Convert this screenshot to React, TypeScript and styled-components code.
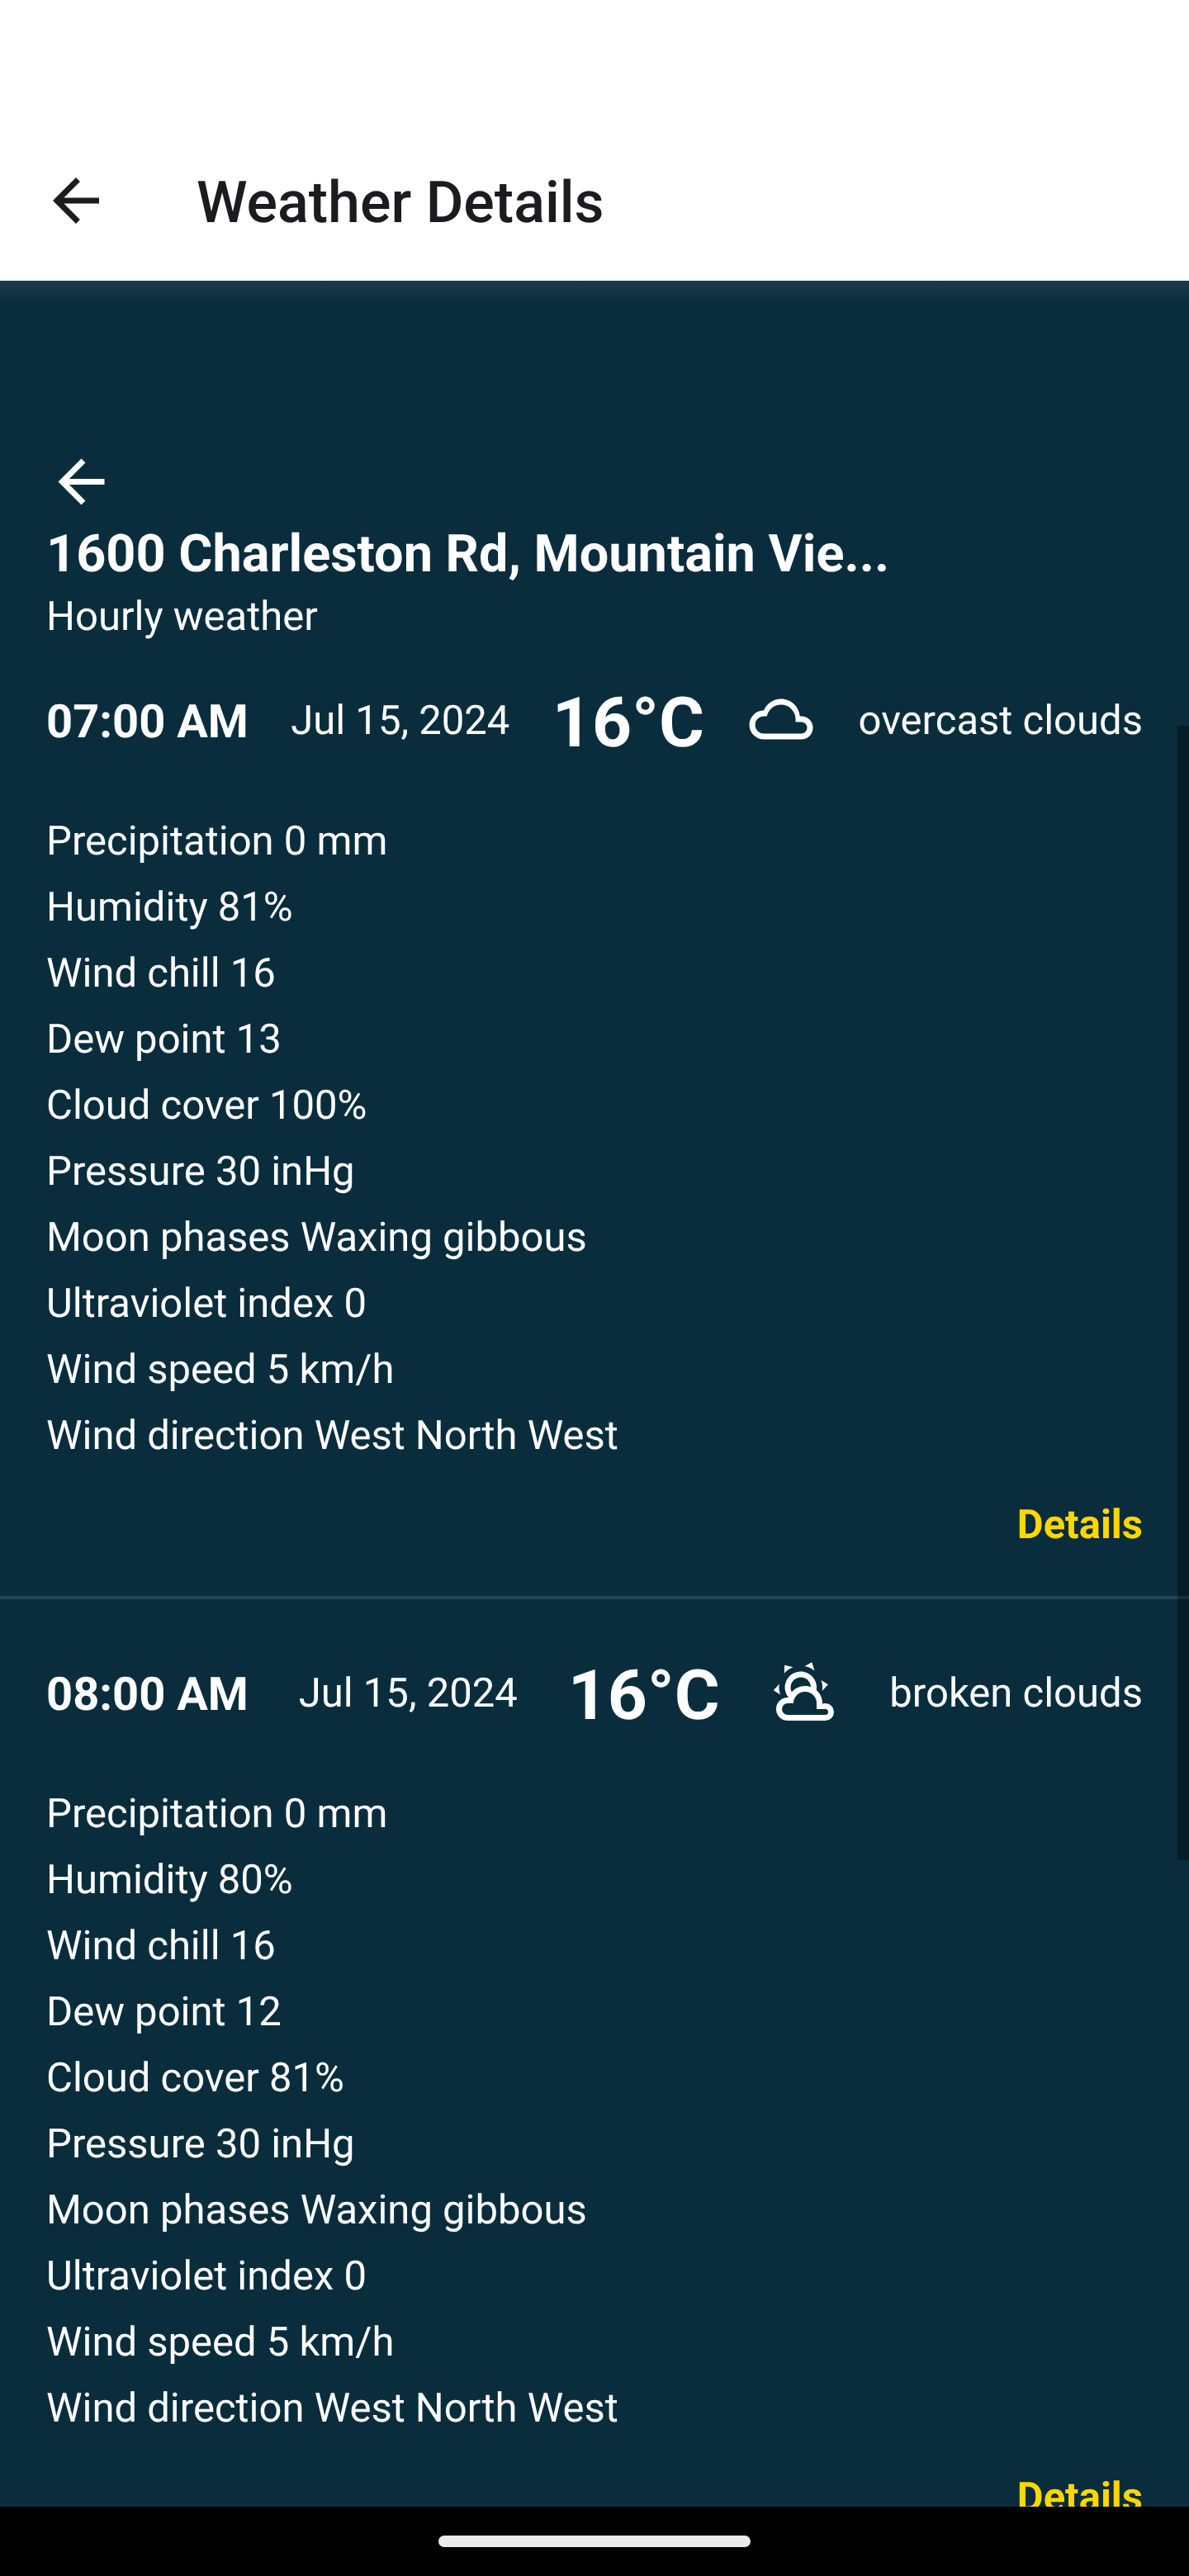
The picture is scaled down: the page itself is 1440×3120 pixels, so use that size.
import React from "react";
import styled, { createGlobalStyle } from "styled-components";

const GlobalStyle = createGlobalStyle`
  *, *::before, *::after { box-sizing: border-box; }
  body { margin: 0; background: #000; }
`;

const Screen = styled.div`
  width: 1440px;
  height: 3120px;
  display: flex;
  flex-direction: column;
  overflow: hidden;
  font-family: Roboto, "Noto Sans", sans-serif;
  font-size: 49px;
  color: #fff;
  text-rendering: geometricPrecision;
`;

const AppBar = styled.header`
  height: 340px;
  flex: none;
  display: flex;
  align-items: center;
  gap: 104px;
  padding: 146px 0 0 50px;
  background: #fff;
  color: #1c1b1f;
`;

const Title = styled.h1`
  margin: 6px 0 0;
  font-size: 70px;
  line-height: 82px;
  font-weight: 500;
  white-space: nowrap;
`;

const Glyph = styled.svg`
  display: block;
  width: 84px;
  height: 84px;
  flex: none;
  fill: currentColor;
`;

const Content = styled.main`
  position: relative;
  flex: 1;
  min-height: 0;
  overflow: hidden;
  padding-top: 202px;
  background: linear-gradient(#1a3a49, #0a2d3d 28px) #0a2d3d;
`;

const Place = styled.section`
  padding: 0 56px;

  ${Glyph} {
    transform: translate(0.5px, -0.5px);
  }
`;

const Address = styled.h2`
  margin: 9px 0 0;
  font-size: 63px;
  line-height: 74px;
  font-weight: 700;
  white-space: nowrap;
`;

const Subtitle = styled.p`
  margin: 9px 0 0;
  line-height: 58px;
`;

const HourList = styled.div`
  display: flex;
  flex-direction: column;
  gap: 66px;
  margin-top: 49px;
`;

const Hour = styled.article`
  flex: none;
  height: 1112px;
  padding: 0 56px;
  border-bottom: 4px solid #20475a;
`;

const Summary = styled.div`
  display: flex;
  align-items: center;
  justify-content: space-between;
  height: 98px;
  white-space: nowrap;

  ${Glyph} {
    margin-bottom: 6px;
  }
`;

const Time = styled.span`
  font-size: 56px;
  line-height: 66px;
  font-weight: 700;
`;

const SummaryText = styled.span`
  margin-bottom: 2px;
  line-height: 58px;
`;

const Temperature = styled.span`
  margin-top: 2px;
  font-size: 84px;
  line-height: 99px;
  font-weight: 700;
`;

const Readings = styled.ul`
  margin: 56px 0 0;
  padding: 0;
  list-style: none;
`;

const Reading = styled.li`
  height: 80px;
  line-height: 80px;
`;

const DetailsLink = styled.div`
  margin-top: 39px;
  line-height: 58px;
  text-align: right;
  font-weight: 700;
  color: #ffd700;
`;

const ScrollThumb = styled.div`
  position: absolute;
  right: 0;
  top: 539px;
  width: 14px;
  height: 1374px;
  background: rgba(0, 0, 0, 0.35);
`;

const NavigationBar = styled.footer`
  flex: none;
  height: 84px;
  display: flex;
  justify-content: center;
  align-items: center;
  background: #000;
`;

const HomeHandle = styled.div`
  width: 378px;
  height: 14px;
  border-radius: 7px;
  background: #ebebeb;
`;

const ARROW = "M20 11H7.83l5.59-5.59L12 4l-8 8 8 8 1.41-1.41L7.83 13H20v-2z";
const CLOUD =
  "M6 19a5 5 0 0 1-5-5 5 5 0 0 1 5-5c1-2.35 3.3-4 6-4 3.43 0 6.24 2.66 6.5 6.03L19 11a4 4 0 0 1 4 4 4 4 0 0 1-4 4H6m13-6h-2v-1a5 5 0 0 0-5-5c-2.42 0-4.44 1.72-4.9 4H6a3 3 0 0 0-3 3 3 3 0 0 0 3 3h13a2 2 0 0 0 2-2 2 2 0 0 0-2-2z";
const PARTLY_CLOUDY =
  "M12.74 5.47C15.1 6.5 16.35 9.03 15.92 11.46C17.19 12.56 18 14.19 18 16V16.17C18.31 16.06 18.65 16 19 16A3 3 0 0 1 22 19A3 3 0 0 1 19 22H6A4 4 0 0 1 2 18A4 4 0 0 1 6 14H6.27C5 12.45 4.6 10.24 5.5 8.26C6.72 5.5 9.97 4.24 12.74 5.47M11.93 7.3C10.16 6.5 8.09 7.31 7.31 9.07C6.85 10.09 6.93 11.22 7.41 12.13C8.5 10.83 10.16 10 12 10C12.7 10 13.38 10.12 14 10.34C13.94 9.06 13.18 7.86 11.93 7.3M13.55 3.64C13 3.4 12.45 3.23 11.88 3.12L14.37 1.82L15.27 4.71C14.76 4.29 14.19 3.93 13.55 3.64M6.09 4.44C5.6 4.79 5.17 5.19 4.8 5.63L4.91 2.82L7.87 3.5C7.25 3.71 6.65 4.03 6.09 4.44M18 9.71C17.91 9.12 17.78 8.55 17.59 8L19.97 9.5L17.92 11.73C18.03 11.08 18.05 10.4 18 9.71M3.04 11.3C3.11 11.9 3.24 12.47 3.43 13L1.06 11.5L3.1 9.28C3 9.93 2.97 10.61 3.04 11.3M19 18H16V16A4 4 0 0 0 12 12A4 4 0 0 0 8 16H6A2 2 0 0 0 4 18A2 2 0 0 0 6 20H19A1 1 0 0 0 20 19A1 1 0 0 0 19 18Z";

const Icon = ({ d }: { d: string }) => (
  <Glyph viewBox="0 0 24 24">
    <path d={d} />
  </Glyph>
);

interface Forecast {
  time: string;
  icon: string;
  sky: string;
  readings: string[];
}

const readings = (humidity: number, dew: number, cover: number) => [
  "Precipitation 0 mm",
  `Humidity ${humidity}%`,
  "Wind chill 16",
  `Dew point ${dew}`,
  `Cloud cover ${cover}%`,
  "Pressure 30 inHg",
  "Moon phases Waxing gibbous",
  "Ultraviolet index 0",
  "Wind speed 5 km/h",
  "Wind direction West North West",
];

const forecasts: Forecast[] = [
  { time: "07:00 AM", icon: CLOUD, sky: "overcast clouds", readings: readings(81, 13, 100) },
  { time: "08:00 AM", icon: PARTLY_CLOUDY, sky: "broken clouds", readings: readings(80, 12, 81) },
];

const HourCard = ({ time, icon, sky, readings }: Forecast) => (
  <Hour>
    <Summary>
      <Time>{time}</Time>
      <SummaryText>Jul 15, 2024</SummaryText>
      <Temperature>16°C</Temperature>
      <Icon d={icon} />
      <SummaryText>{sky}</SummaryText>
    </Summary>
    <Readings>
      {readings.map((text) => (
        <Reading key={text}>{text}</Reading>
      ))}
    </Readings>
    <DetailsLink>Details</DetailsLink>
  </Hour>
);

export default function App() {
  return (
    <Screen>
      <GlobalStyle />
      <AppBar>
        <Icon d={ARROW} />
        <Title>Weather Details</Title>
      </AppBar>
      <Content>
        <Place>
          <Icon d={ARROW} />
          <Address>1600 Charleston Rd, Mountain Vie...</Address>
          <Subtitle>Hourly weather</Subtitle>
        </Place>
        <HourList>
          {forecasts.map((forecast) => (
            <HourCard key={forecast.time} {...forecast} />
          ))}
        </HourList>
        <ScrollThumb />
      </Content>
      <NavigationBar>
        <HomeHandle />
      </NavigationBar>
    </Screen>
  );
}
